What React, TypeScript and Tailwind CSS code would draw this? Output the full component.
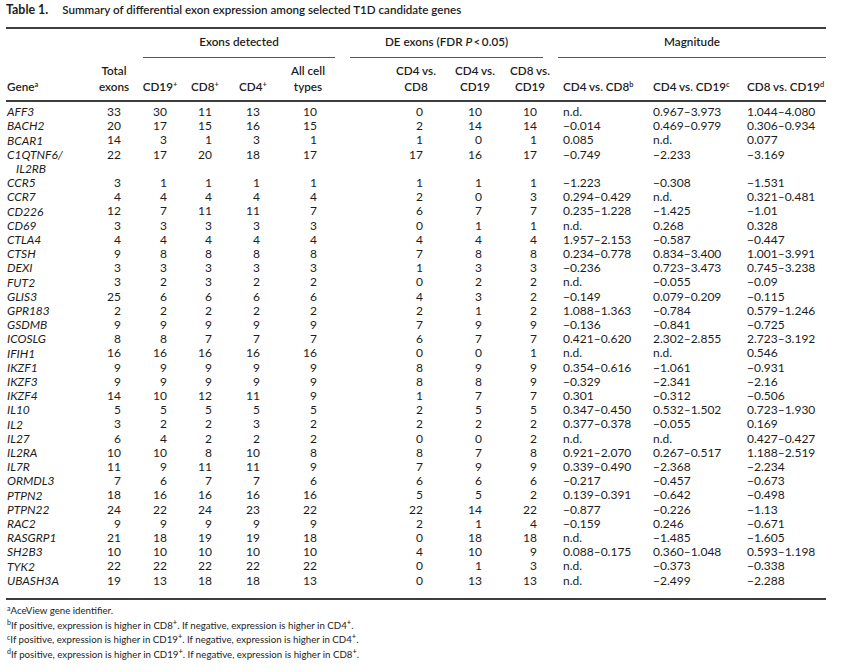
import React from "react";

// Table 1 – differential exon expression among T1D candidate genes

type Row = {
  gene: React.ReactNode;
  counts: string[]; // total, CD19, CD8, CD4, all, de48, de419, de819
  mag: string[];
  lines?: number;
};

const rows: Row[] = [
  { gene: "AFF3", counts: ["33", "30", "11", "13", "10", "0", "10", "10"], mag: ["n.d.", "0.967–3.973", "1.044–4.080"] },
  { gene: "BACH2", counts: ["20", "17", "15", "16", "15", "2", "14", "14"], mag: ["−0.014", "0.469–0.979", "0.306–0.934"] },
  { gene: "BCAR1", counts: ["14", "3", "1", "3", "1", "1", "0", "1"], mag: ["0.085", "n.d.", "0.077"] },
  {
    gene: (
      <>
        C1QTNF6/
        <br />
        <span className="pl-[9px]">IL2RB</span>
      </>
    ),
    counts: ["22", "17", "20", "18", "17", "17", "16", "17"],
    mag: ["−0.749", "−2.233", "−3.169"],
    lines: 2,
  },
  { gene: "CCR5", counts: ["3", "1", "1", "1", "1", "1", "1", "1"], mag: ["−1.223", "−0.308", "−1.531"] },
  { gene: "CCR7", counts: ["4", "4", "4", "4", "4", "2", "0", "3"], mag: ["0.294–0.429", "n.d.", "0.321–0.481"] },
  { gene: "CD226", counts: ["12", "7", "11", "11", "7", "6", "7", "7"], mag: ["0.235–1.228", "−1.425", "−1.01"] },
  { gene: "CD69", counts: ["3", "3", "3", "3", "3", "0", "1", "1"], mag: ["n.d.", "0.268", "0.328"] },
  { gene: "CTLA4", counts: ["4", "4", "4", "4", "4", "4", "4", "4"], mag: ["1.957–2.153", "−0.587", "−0.447"] },
  { gene: "CTSH", counts: ["9", "8", "8", "8", "8", "7", "8", "8"], mag: ["0.234–0.778", "0.834–3.400", "1.001–3.991"] },
  { gene: "DEXI", counts: ["3", "3", "3", "3", "3", "1", "3", "3"], mag: ["−0.236", "0.723–3.473", "0.745–3.238"] },
  { gene: "FUT2", counts: ["3", "2", "3", "2", "2", "0", "2", "2"], mag: ["n.d.", "−0.055", "−0.09"] },
  { gene: "GLIS3", counts: ["25", "6", "6", "6", "6", "4", "3", "2"], mag: ["−0.149", "0.079–0.209", "−0.115"] },
  { gene: "GPR183", counts: ["2", "2", "2", "2", "2", "2", "1", "2"], mag: ["1.088–1.363", "−0.784", "0.579–1.246"] },
  { gene: "GSDMB", counts: ["9", "9", "9", "9", "9", "7", "9", "9"], mag: ["−0.136", "−0.841", "−0.725"] },
  { gene: "ICOSLG", counts: ["8", "8", "7", "7", "7", "6", "7", "7"], mag: ["0.421–0.620", "2.302–2.855", "2.723–3.192"] },
  { gene: "IFIH1", counts: ["16", "16", "16", "16", "16", "0", "0", "1"], mag: ["n.d.", "n.d.", "0.546"] },
  { gene: "IKZF1", counts: ["9", "9", "9", "9", "9", "8", "9", "9"], mag: ["0.354–0.616", "−1.061", "−0.931"] },
  { gene: "IKZF3", counts: ["9", "9", "9", "9", "9", "8", "8", "9"], mag: ["−0.329", "−2.341", "−2.16"] },
  { gene: "IKZF4", counts: ["14", "10", "12", "11", "9", "1", "7", "7"], mag: ["0.301", "−0.312", "−0.506"] },
  { gene: "IL10", counts: ["5", "5", "5", "5", "5", "2", "5", "5"], mag: ["0.347–0.450", "0.532–1.502", "0.723–1.930"] },
  { gene: "IL2", counts: ["3", "2", "2", "3", "2", "2", "2", "2"], mag: ["0.377–0.378", "−0.055", "0.169"] },
  { gene: "IL27", counts: ["6", "4", "2", "2", "2", "0", "0", "2"], mag: ["n.d.", "n.d.", "0.427–0.427"] },
  { gene: "IL2RA", counts: ["10", "10", "8", "10", "8", "8", "7", "8"], mag: ["0.921–2.070", "0.267–0.517", "1.188–2.519"] },
  { gene: "IL7R", counts: ["11", "9", "11", "11", "9", "7", "9", "9"], mag: ["0.339–0.490", "−2.368", "−2.234"] },
  { gene: "ORMDL3", counts: ["7", "6", "7", "7", "6", "6", "6", "6"], mag: ["−0.217", "−0.457", "−0.673"] },
  { gene: "PTPN2", counts: ["18", "16", "16", "16", "16", "5", "5", "2"], mag: ["0.139–0.391", "−0.642", "−0.498"] },
  { gene: "PTPN22", counts: ["24", "22", "24", "23", "22", "22", "14", "22"], mag: ["−0.877", "−0.226", "−1.13"] },
  { gene: "RAC2", counts: ["9", "9", "9", "9", "9", "2", "1", "4"], mag: ["−0.159", "0.246", "−0.671"] },
  { gene: "RASGRP1", counts: ["21", "18", "19", "19", "18", "0", "18", "18"], mag: ["n.d.", "−1.485", "−1.605"] },
  { gene: "SH2B3", counts: ["10", "10", "10", "10", "10", "4", "10", "9"], mag: ["0.088–0.175", "0.360–1.048", "0.593–1.198"] },
  { gene: "TYK2", counts: ["22", "22", "22", "22", "22", "0", "1", "3"], mag: ["n.d.", "−0.373", "−0.338"] },
  { gene: "UBASH3A", counts: ["19", "13", "18", "18", "13", "0", "13", "13"], mag: ["n.d.", "−2.499", "−2.288"] },
];

// line pitch of the body rows in the original
const PITCH = 14.2;

// row heights on whole pixels so the rows don't drift
const heights: number[] = [];
{
  let line = 0;
  for (const r of rows) {
    const n = r.lines ?? 1;
    heights.push(Math.round((line + n) * PITCH) - Math.round(line * PITCH));
    line += n;
  }
}

// padding that puts each count column's centre where the original has it
const countPad = ["", "", "", "", "pr-[4px]", "pl-[40px]", "", ""];

const Sup = ({ children }: { children: React.ReactNode }) => (
  <sup className="text-[7.5px] font-semibold">{children}</sup>
);

const footnotes = [
  { mark: "a", text: <>AceView gene identifier.</> },
  { mark: "b", text: <>If positive, expression is higher in CD8<Sup>+</Sup>. If negative, expression is higher in CD4<Sup>+</Sup>.</> },
  { mark: "c", text: <>If positive, expression is higher in CD19<Sup>+</Sup>. If negative, expression is higher in CD4<Sup>+</Sup>.</> },
  { mark: "d", text: <>If positive, expression is higher in CD19<Sup>+</Sup>. If negative, expression is higher in CD8<Sup>+</Sup>.</> },
];

export default function App() {
  return (
    <div className="w-[842px] h-[672px] overflow-hidden bg-white text-[#1c1c1c] font-['Lato','Liberation_Sans',sans-serif] text-[12px] pl-[6px] pr-[8px] pt-[3px]">
      <div className="h-[24px] leading-[14px] font-bold text-[11.6px]">
        <span className="text-[12.4px]">Table 1.</span>
        <span className="ml-[14px] font-semibold">Summary of differential exon expression among selected T1D candidate genes</span>
      </div>

      <table className="w-[820px] table-fixed border-collapse border-t-2 border-[#3d3d3d]">
        <colgroup>
          <col className="w-[84px]" />
          <col className="w-[48px]" />
          <col className="w-[44px]" />
          <col className="w-[46px]" />
          <col className="w-[50px]" />
          <col className="w-[68px]" />
          <col className="w-[100px]" />
          <col className="w-[58px]" />
          <col className="w-[52px]" />
          <col className="w-[94px]" />
          <col className="w-[94px]" />
          <col className="w-[82px]" />
        </colgroup>
        <thead className="font-semibold text-[11.7px]">
          <tr className="h-[30px] leading-[14px]">
            <th rowSpan={2} className="text-left align-bottom pl-[1px] pb-[6px] font-semibold leading-[15.5px]">
              Gene<Sup>a</Sup>
            </th>
            <th rowSpan={2} className="text-center align-bottom pb-[6px] font-semibold leading-[15.5px]">
              Total
              <br />
              exons
            </th>
            <th colSpan={4} className="align-bottom font-semibold">
              <div className="ml-[5px] mr-[11px] pb-[9px] border-b border-[#555]">Exons detected</div>
            </th>
            <th colSpan={3} className="align-bottom font-semibold">
              <div className="ml-[4px] mr-[13px] pb-[9px] border-b border-[#555]">
                DE exons (FDR <i>P</i>&thinsp;&lt;&thinsp;0.05)
              </div>
            </th>
            <th colSpan={3} className="align-bottom font-semibold">
              <div className="ml-[2px] pb-[9px] border-b border-[#555]">Magnitude</div>
            </th>
          </tr>
          <tr className="h-[43px] leading-[15.5px]">
            <th className="align-bottom pb-[6px] font-semibold">CD19<Sup>+</Sup></th>
            <th className="align-bottom pb-[6px] font-semibold">CD8<Sup>+</Sup></th>
            <th className="align-bottom pb-[6px] font-semibold">CD4<Sup>+</Sup></th>
            <th className="align-bottom pb-[6px] pr-[8px] font-semibold">
              All cell
              <br />
              types
            </th>
            <th className="align-bottom pb-[6px] pl-[40px] font-semibold">
              CD4 vs.
              <br />
              CD8
            </th>
            <th className="align-bottom pb-[6px] font-semibold">
              CD4 vs.
              <br />
              CD19
            </th>
            <th className="align-bottom pb-[6px] font-semibold">
              CD8 vs.
              <br />
              CD19
            </th>
            <th className="text-left align-bottom pl-[7px] pb-[6px] font-semibold">
              CD4 vs. CD8<Sup>b</Sup>
            </th>
            <th className="text-left align-bottom pl-[3px] pb-[6px] font-semibold">
              CD4 vs. CD19<Sup>c</Sup>
            </th>
            <th className="text-left align-bottom pl-[3px] pb-[6px] font-semibold">
              CD8 vs. CD19<Sup>d</Sup>
            </th>
          </tr>
        </thead>
        <tbody className="border-t-2 border-b-2 border-[#3d3d3d] leading-[14px]">
          <tr className="h-[4px]">
            <td colSpan={12} />
          </tr>
          {rows.map((r, i) => (
            <tr key={i} style={{ height: heights[i] }}>
              <td className="pl-[1px] italic align-middle">{r.gene}</td>
              {r.counts.map((c, j) => (
                <td key={j} className={`align-top ${countPad[j]}`}>
                  <div className="w-[14px] mx-auto text-right">{c}</div>
                </td>
              ))}
              <td className="pl-[7px] align-top">{r.mag[0]}</td>
              <td className="pl-[3px] align-top">{r.mag[1]}</td>
              <td className="pl-[3px] align-top">{r.mag[2]}</td>
            </tr>
          ))}
          <tr className="h-[11px]">
            <td colSpan={12} />
          </tr>
        </tbody>
      </table>

      <div className="pt-[3px] leading-[14.6px] pl-[1px] text-[9.7px]">
        {footnotes.map((f) => (
          <div key={f.mark}>
            <sup className="text-[7px]">{f.mark}</sup>
            {f.text}
          </div>
        ))}
      </div>
    </div>
  );
}
